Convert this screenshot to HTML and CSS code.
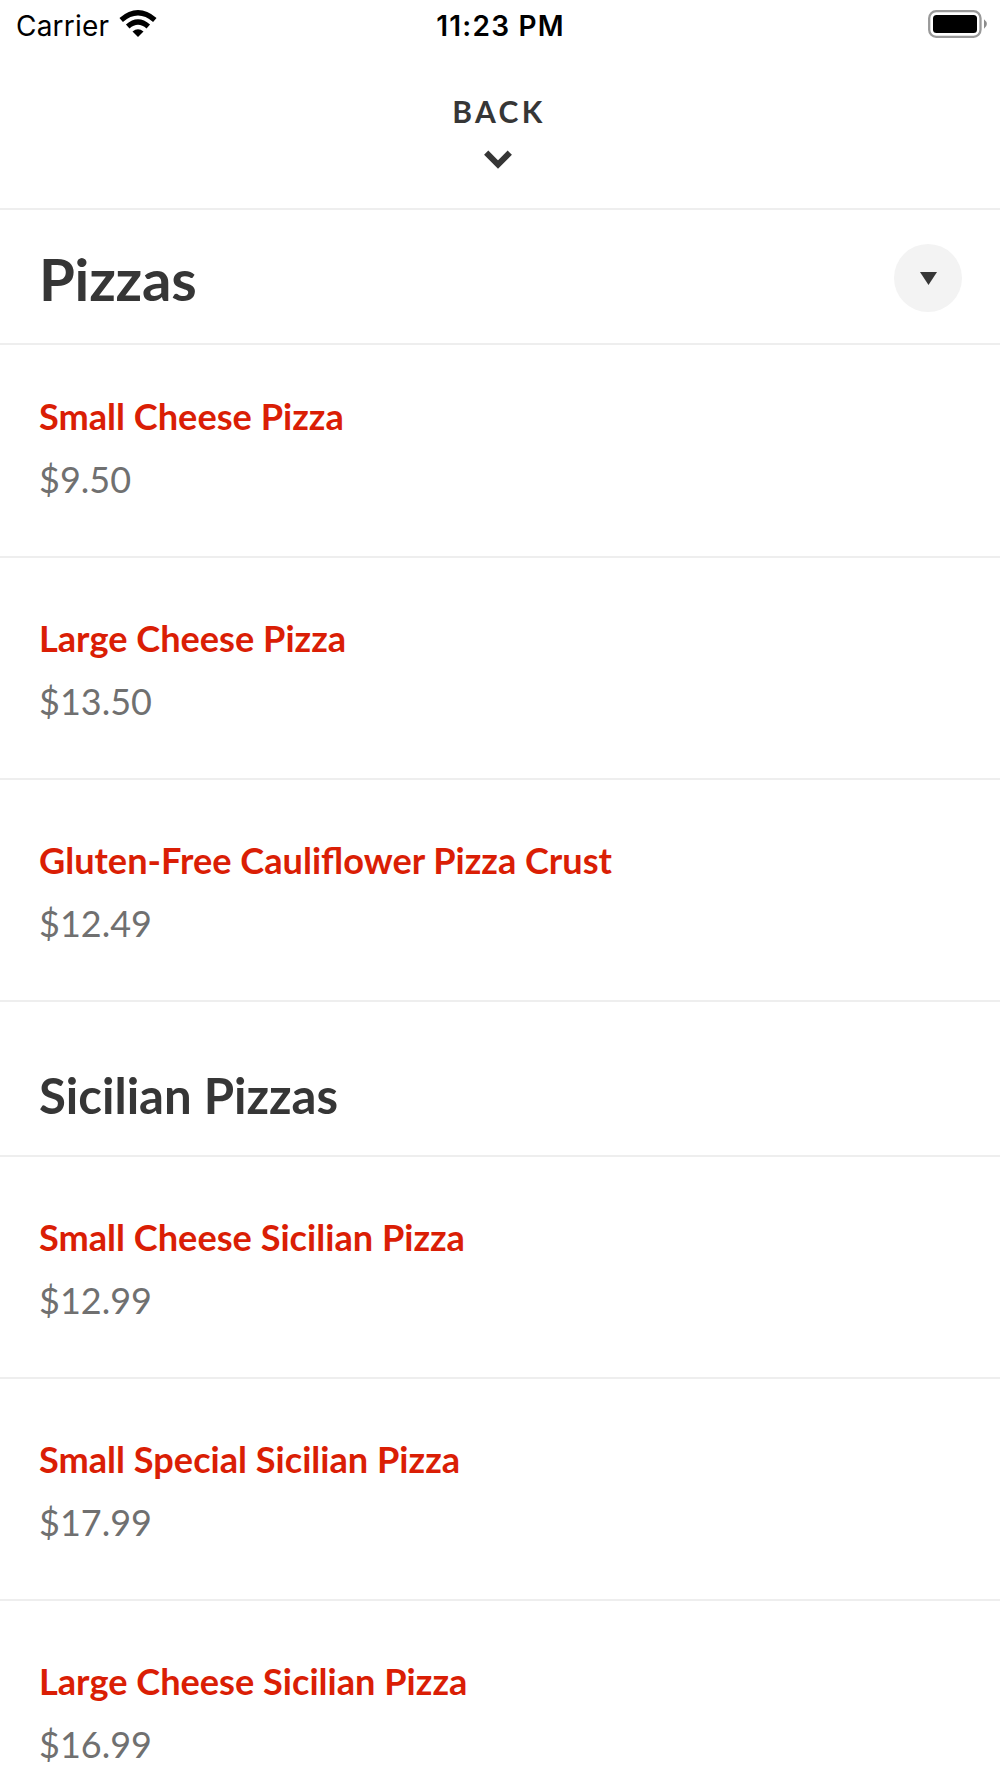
FILE: index.html
```html
<!DOCTYPE html>
<html lang="en">
<head>
	<meta charset="utf-8">
	<title>Pizzas</title>
	<link rel="stylesheet" href="styles.css">
</head>
<body>

	<div class="status">
		<div class="carrier">
			<span>Carrier</span>
			<svg class="wifi" width="38" height="28" viewBox="0 0 38 28">
				<path d="M19 27l-5.500-5.500q5.500-4.500 11 0z"/>
				<path d="M8.700 16.500q10.300-9 20.600 0M2.200 10q16.800-14.400 33.600 0" fill="none" stroke="#000" stroke-width="5.300"/>
			</svg>
		</div>
		<div class="time">11:23 PM</div>
		<svg class="battery" width="60" height="28" viewBox="0 0 60 28">
			<rect x="1.200" y="1.200" width="51.300" height="25.600" rx="7" fill="none" stroke="#999" stroke-width="2.300"/>
			<rect x="5" y="5" width="44" height="18" rx="3.500"/>
			<path d="M56 9.200q5.800 4.800 0 9.600z" fill="#8c8c8c"/>
		</svg>
	</div>

	<div class="back">
		<span>BACK</span>
		<svg class="chevron" width="28" height="19" viewBox="0 0 28 19">
			<path d="M2.200 2.700l11.800 11.800l11.800-11.800" fill="none" stroke="#363636" stroke-width="6"/>
		</svg>
	</div>

	<div class="title">
		<h1>Pizzas</h1>
		<div class="toggle">
			<svg width="17" height="13" viewBox="0 0 17 13"><path d="M0 0h17l-8.500 13z" fill="#363636"/></svg>
		</div>
	</div>

	<ul class="menu">
		<li class="first"><h3>Small Cheese Pizza</h3><p>$9.50</p></li>
		<li><h3>Large Cheese Pizza</h3><p>$13.50</p></li>
		<li><h3>Gluten-Free Cauliflower Pizza Crust</h3><p>$12.49</p></li>
	</ul>

	<h2>Sicilian Pizzas</h2>

	<ul class="menu">
		<li><h3>Small Cheese Sicilian Pizza</h3><p>$12.99</p></li>
		<li><h3>Small Special Sicilian Pizza</h3><p>$17.99</p></li>
		<li><h3>Large Cheese Sicilian Pizza</h3><p>$16.99</p></li>
	</ul>

</body>
</html>
```

FILE: styles.css
```css
* {
	box-sizing: border-box;
	margin: 0;
	padding: 0;
}

body {
	height: 1778px;
	overflow: hidden;
	background: #fff;
	color: #363636;
	font-family: Lato, sans-serif;
}

.status {
	display: grid;
	grid-template-columns: 1fr auto 1fr;
	align-items: center;
	height: 50px;
	padding: 0 12px 0 13px;
	color: #000;
	font-family: Inter, sans-serif;
	font-size: 28px;
}

.carrier {
	display: flex;
	align-items: center;
	gap: 10px;
	padding-left: 3px;
	letter-spacing: 0.2px;
}

.carrier span,
.time {
	padding-top: 2px;
}

.wifi {
	margin-top: -2px;
}

.time {
	font-weight: 600;
	letter-spacing: 1.2px;
}

.battery {
	justify-self: end;
	margin-top: -2px;
}

.back {
	display: flex;
	flex-direction: column;
	align-items: center;
	height: 160px;
	padding: 43px 4px 0 0;
	border-bottom: 2px solid #eee;
	font-size: 30px;
	font-weight: 700;
	line-height: 36px;
	letter-spacing: 3.4px;
}

.back span {
	margin-right: -2px;
}

.chevron {
	margin-top: 21px;
}

.title {
	display: flex;
	align-items: center;
	justify-content: space-between;
	height: 135px;
	padding: 2px 38.5px 0 39px;
	border-bottom: 2px solid #eee;
}

h1 {
	padding-top: 1px;
	font-size: 58px;
	font-weight: 700;
	letter-spacing: -0.2px;
}

.toggle {
	display: flex;
	align-items: center;
	justify-content: center;
	width: 68px;
	height: 68px;
	padding: 2px 0 0 1px;
	border-radius: 50%;
	background: #f3f3f3;
}

.menu {
	list-style: none;
}

.menu li {
	height: 222px;
	padding: 56px 39px 0;
	border-bottom: 2px solid #eee;
}

.menu .first {
	height: 213px;
	padding-top: 47px;
}

h3 {
	color: #da1e05;
	font-size: 36.15px;
	font-weight: 700;
	line-height: 48px;
}

.menu p {
	margin-top: 14.5px;
	color: #707070;
	font-size: 36px;
	line-height: 48px;
}

h2 {
	height: 155px;
	padding: 63px 39px 0;
	border-bottom: 2px solid #eee;
	font-size: 49.1px;
	font-weight: 700;
	line-height: 60px;
}
```
